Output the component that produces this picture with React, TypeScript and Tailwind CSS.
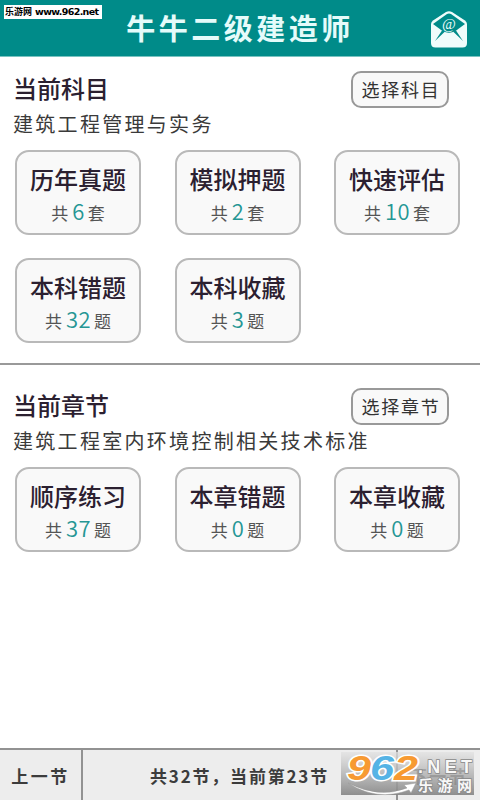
interface CardProps {
  title: string;
  count: number;
  unit: string;
}

const subjectCards: CardProps[] = [
  { title: '历年真题', count: 6, unit: '套' },
  { title: '模拟押题', count: 2, unit: '套' },
  { title: '快速评估', count: 10, unit: '套' },
  { title: '本科错题', count: 32, unit: '题' },
  { title: '本科收藏', count: 3, unit: '题' },
];

const chapterCards: CardProps[] = [
  { title: '顺序练习', count: 37, unit: '题' },
  { title: '本章错题', count: 0, unit: '题' },
  { title: '本章收藏', count: 0, unit: '题' },
];

function Card({ title, count, unit }: CardProps) {
  return (
    <button className="flex h-[85px] w-[126px] flex-col rounded-[14px] border-2 border-[#b9b9b9] bg-[#f9f9f9] pt-[11px] text-center">
      <div className="h-[33px] w-full text-[24px] leading-[32px] font-medium text-[#2b2030]">{title}</div>
      <div className="flex h-[33px] w-full items-center justify-center text-[17px] text-[#555]">
        <span>共</span>
        <span className="mr-[3px] ml-[4px] -mt-[5px] text-[22px] tracking-[0.3px] font-[350] text-[#259694]">{count}</span>
        <span>{unit}</span>
      </div>
    </button>
  );
}

interface SectionProps {
  heading: string;
  action: string;
  name: string;
  cards: CardProps[];
}

function Section({ heading, action, name, cards }: SectionProps) {
  return (
    <section>
      <div className="flex h-[37px] items-center justify-between pr-[31px] pl-[13px]">
        <h2 className="h-[37px] text-[24px] leading-[33px] font-medium text-[#2b2030]">{heading}</h2>
        <button className="h-[37px] w-[98px] rounded-[10px] border-2 border-[#999] bg-[#f9f9f9] pl-[2px] text-[18px] leading-[33px] tracking-[1.7px] text-[#333]">
          {action}
        </button>
      </div>
      <p className="h-[32px] pl-[13px] text-[20px] leading-[31px] tracking-[2.3px] text-[#3a3a3a]">{name}</p>
      <div className="mt-[10px] grid grid-cols-[126px_126px_126px] gap-x-[33.5px] gap-y-[23px] pl-[15px]">
        {cards.map((card) => (
          <Card key={card.title} {...card} />
        ))}
      </div>
    </section>
  );
}

function MailIcon() {
  return (
    <svg width="38" height="39" viewBox="0 0 38 39" fill="none">
      <path d="M1 14Q1 12 3 10.500L16 2Q19 .3 22 2L35 10.500Q37 12 37 14V33Q37 37.500 32.500 37.500H5.500Q1 37.500 1 33Z" fill="#effcfb" />
      <path d="M3 14L17 4Q19 2.800 21 4L35 14L25.500 21Q19 24 12.500 21Z" fill="#008b89" />
      <path d="M5 31L12 20.500L15 21.500ZM33 31L26 20.500L23 21.500Z" fill="#008b89" />
      <circle cx="19" cy="14.500" r="8" fill="#008b89" />
      <text x="19" y="18.500" textAnchor="middle" fontSize="15" fontFamily="Liberation Serif, serif" fill="#effcfb">@</text>
    </svg>
  );
}

function Watermark() {
  return (
    <div className="absolute top-[2px] left-[341px] h-[43px] w-[133px]">
      <svg className="overflow-visible" width="133" height="43" viewBox="0 0 133 43">
        <defs>
          <linearGradient id="plate" x1="0" y1="0" x2="0" y2="1">
            <stop offset="0" stopColor="#e2e2e2" stopOpacity=".75" />
            <stop offset="1" stopColor="#848484" stopOpacity=".9" />
          </linearGradient>
        </defs>
        <rect width="133" height="43" fill="url(#plate)" />
        <g fontFamily="Liberation Sans, sans-serif" fontSize="35" fontWeight="700" fontStyle="italic" stroke="#fff" strokeWidth="3" paintOrder="stroke">
          <text x="6" y="28" fill="#f79a32" textLength="24" lengthAdjust="spacingAndGlyphs">9</text>
          <text x="29" y="28" fill="#55b3e5" textLength="24" lengthAdjust="spacingAndGlyphs">6</text>
          <text x="53" y="28" fill="#f79a32" textLength="24" lengthAdjust="spacingAndGlyphs">2</text>
        </g>
        <path d="M7 31Q38 47 66 36L63 33L75 31L70 41L68 38Q36 50 7 31Z" fill="#fff" stroke="#999" strokeWidth=".5" />
        <g fontWeight="700" fill="#f8f8f8" stroke="#888" strokeWidth="1.5" paintOrder="stroke">
          <text x="77" y="21" fontSize="18" textLength="54" fontFamily="Liberation Sans, sans-serif">.NET</text>
          <text x="77" y="39" fontSize="15" textLength="54" fontFamily="Noto Sans CJK SC, sans-serif">乐游网</text>
        </g>
      </svg>
    </div>
  );
}

export default function App() {
  return (
    <div className="flex h-[800px] w-[480px] flex-col overflow-hidden bg-white font-['Noto_Sans_CJK_SC',sans-serif]">
      <header className="relative flex h-[57px] shrink-0 items-center justify-center border-b border-[#79c3c1] bg-[#008b89]">
        <h1 className="-mt-[2px] text-[29px] leading-[54px] font-bold tracking-[3.5px] text-[#e5fbfa]">牛牛二级建造师</h1>
        <div className="absolute top-[10px] left-[430px]">
          <MailIcon />
        </div>
        <div className="absolute top-[5px] left-[4px] flex h-[14px] w-[98px] items-center bg-white pl-px text-[9px] leading-[14px] font-bold whitespace-nowrap text-black">
          <span>乐游网</span>
          <span className="ml-[3px] font-['DejaVu_Sans',sans-serif] text-[9.5px] tracking-[-0.65px]">www.962.net</span>
        </div>
      </header>

      <main className="flex-1">
        <div className="h-[308px] border-b-2 border-[#999] pt-[14px]">
          <Section heading="当前科目" action="选择科目" name="建筑工程管理与实务" cards={subjectCards} />
        </div>
        <div className="pt-[23px]">
          <Section heading="当前章节" action="选择章节" name="建筑工程室内环境控制相关技术标准" cards={chapterCards} />
        </div>
      </main>

      <footer className="relative flex h-[52px] shrink-0 border-t-2 border-[#929292] bg-[#ededed] text-[17px] leading-[52px] font-bold text-[#3c3c3c]">
        <button className="w-[83px] border-r-2 border-[#929292] tracking-[2.5px]">上一节</button>
        <div className="w-[315px] border-r-2 border-[#929292] text-center tracking-[1.8px]">共32节，当前第23节</div>
        <button className="flex-1 tracking-[2.5px]">下一节</button>
        <Watermark />
      </footer>
    </div>
  );
}
